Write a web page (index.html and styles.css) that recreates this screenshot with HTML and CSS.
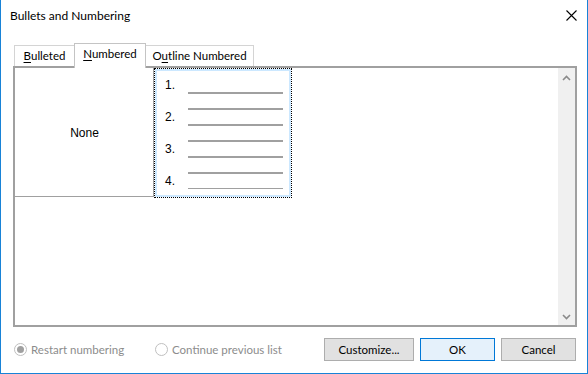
FILE: index.html
```html
<!DOCTYPE html>
<html>
<head>
<meta charset="utf-8">
<link rel="stylesheet" href="styles.css">
</head>
<body>
<div class="dialog">
  <div class="titlebar">
    <span class="title">Bullets and Numbering</span>
    <svg class="close" width="11" height="11" viewBox="0 0 11 11"><path d="M0.5 0.5L10.5 10.5M10.5 0.5L0.5 10.5" stroke="#000" stroke-width="1.1"/></svg>
  </div>
  <div class="tabs">
    <div class="tab tab-bulleted"><u>B</u>ulleted</div>
    <div class="tab tab-numbered active"><u>N</u>umbered</div>
    <div class="tab tab-outline">O<u>u</u>tline Numbered</div>
  </div>
  <div class="panel">
    <div class="content">
      <div class="gallery">
        <div class="cell-none">None</div>
        <div class="cell-list">
          <div class="list-inner">
            <div class="item"><span class="num">1.</span><div class="lines"><span class="ln"></span><span class="ln"></span></div></div>
            <div class="item"><span class="num">2.</span><div class="lines"><span class="ln"></span><span class="ln"></span></div></div>
            <div class="item"><span class="num">3.</span><div class="lines"><span class="ln"></span><span class="ln"></span></div></div>
            <div class="item last"><span class="num">4.</span><div class="lines"><span class="ln"></span><span class="ln"></span></div></div>
          </div>
        </div>
      </div>
    </div>
    <div class="scrollbar">
      <svg width="9" height="6" viewBox="0 0 9 6"><path d="M1 5L4.5 1.5L8 5" fill="none" stroke="#8a8a8a" stroke-width="1.6"/></svg>
      <svg width="9" height="6" viewBox="0 0 9 6"><path d="M1 1L4.5 4.5L8 1" fill="none" stroke="#8a8a8a" stroke-width="1.6"/></svg>
    </div>
  </div>
  <div class="footer">
    <label class="radio radio1"><span class="circle checked"></span>Restart numbering</label>
    <label class="radio"><span class="circle"></span>Continue previous list</label>
    <div class="buttons">
      <button class="btn btn-wide">Customize...</button>
      <button class="btn default">OK</button>
      <button class="btn">Cancel</button>
    </div>
  </div>
</div>
</body>
</html>
```
FILE: styles.css
```css
html, body {
  margin: 0;
  padding: 0;
  background: #fff;
}
.dialog {
  width: 588px;
  height: 374px;
  box-sizing: border-box;
  border: 1px solid #1883d7;
  border-top: none;
  background: #fff;
  font-family: Lato, "Noto Sans", sans-serif;
  font-size: 11.5px;
  color: #000;
  display: flex;
  flex-direction: column;
}
.titlebar {
  height: 31px;
  display: flex;
  align-items: center;
  justify-content: space-between;
  padding: 0 10px 0 9px;
}
.title {
  font-size: 12px;
  line-height: 16px;
  margin-top: 1px;
}
.close {
  display: block;
  margin-top: -1px;
}
.tabs {
  margin-top: 12px;
  height: 23px;
  display: flex;
  align-items: flex-end;
  padding-left: 13px;
  position: relative;
  z-index: 1;
}
.tab {
  height: 21px;
  box-sizing: border-box;
  border: 1px solid #d4d4d4;
  border-bottom: none;
  display: flex;
  align-items: center;
  justify-content: center;
  background: #fff;
  line-height: 14px;
  padding-bottom: 1px;
}
.tab u { text-decoration: underline; text-underline-offset: 2px; }
.tab-bulleted { width: 60px; border-right: none; }
.tab-numbered { width: 72px; }
.tab-outline { width: 108px; border-left: none; }
.tab.active {
  height: 25px;
  margin-bottom: -2px;
  border-color: #c4c4c4;
  padding-bottom: 4px;
}
.panel {
  margin-left: 12px;
  width: 564px;
  height: 261px;
  box-sizing: border-box;
  border: 2px solid #a0a0a0;
  display: flex;
}
.content {
  flex: 1;
  min-width: 0;
}
.gallery {
  display: flex;
  align-items: flex-start;
  height: 130px;
}
.cell-none {
  width: 139px;
  height: 129px;
  box-sizing: border-box;
  box-shadow: inset -1px -1px 0 #a0a0a0;
  display: flex;
  align-items: center;
  justify-content: center;
  font-family: "Liberation Sans", Arial, sans-serif;
  font-size: 12px;
  padding-top: 1px;
  flex: none;
}
.cell-list {
  width: 138px;
  height: 130px;
  box-sizing: border-box;
  border: 1px dotted #000;
  overflow: hidden;
  flex: none;
}
.list-inner {
  height: 100%;
  box-sizing: border-box;
  border: 2px solid #cce8ff;
  padding: 5px 0 0 8px;
  overflow: hidden;
  font-family: "Liberation Sans", Arial, sans-serif;
  font-size: 12px;
}
.item {
  height: 32px;
  display: flex;
  align-items: flex-start;
}
.num {
  width: 23px;
  line-height: 18px;
  height: 18px;
  flex: none;
}
.lines {
  flex: none;
  padding-top: 16px;
  display: flex;
  flex-direction: column;
  gap: 14px;
}
.ln {
  flex: none;
  display: block;
  width: 95px;
  height: 2px;
  background: #a0a0a0;
}
.item.last .ln:first-child {
  height: 1px;
}
.scrollbar {
  width: 17px;
  background: #f0f0f0;
  display: flex;
  flex-direction: column;
  justify-content: space-between;
  align-items: center;
  padding: 7px 0 5px;
  box-sizing: border-box;
  flex: none;
}
.scrollbar svg { display: block; }
.footer {
  display: flex;
  align-items: center;
  margin-top: 11px;
  padding: 0 11px 0 13px;
  height: 23px;
}
.radio {
  display: flex;
  align-items: center;
  color: #8c8c8c;
  line-height: 14px;
}
.radio1 {
  width: 141px;
}
.circle {
  width: 13px;
  height: 13px;
  box-sizing: border-box;
  border: 1px solid #c0c0c0;
  border-radius: 50%;
  margin-right: 4px;
  display: flex;
  align-items: center;
  justify-content: center;
}
.circle.checked::after {
  content: "";
  width: 7px;
  height: 7px;
  border-radius: 50%;
  background: #a0a0a0;
}
.buttons {
  margin-left: auto;
  display: flex;
  gap: 6px;
}
.btn {
  width: 75px;
  height: 23px;
  box-sizing: border-box;
  border: 1px solid #adadad;
  background: #e1e1e1;
  font-family: Lato, "Noto Sans", sans-serif;
  font-size: 11.5px;
  color: #000;
  padding: 0;
  margin: 0;
}
.btn-wide { width: 90px; }
.btn.default {
  border-color: #0078d7;
  background: #e5f1fb;
}
```
